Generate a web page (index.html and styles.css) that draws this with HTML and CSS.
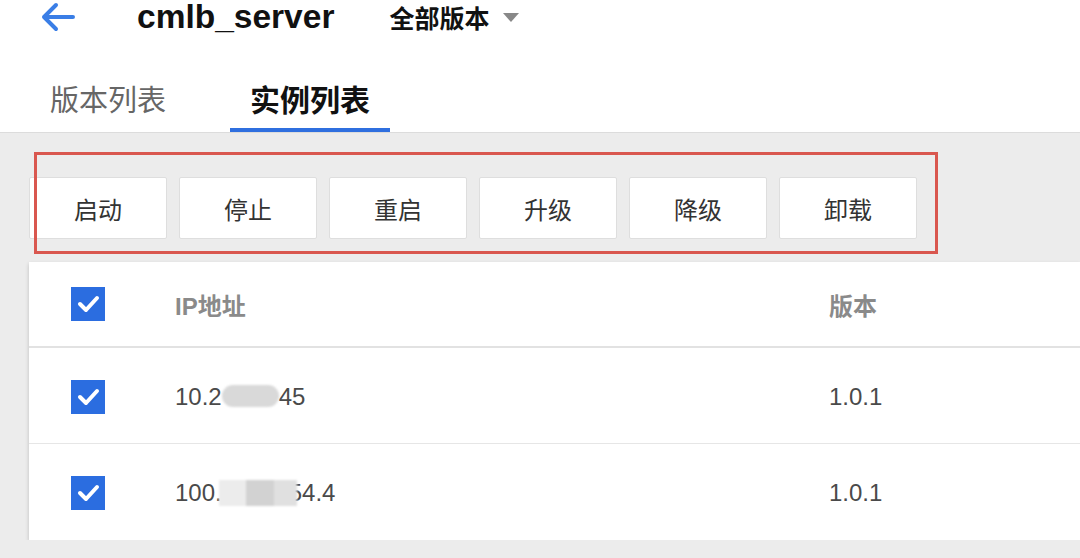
FILE: index.html
```html
<!DOCTYPE html>
<html lang="zh-CN">
<head>
    <meta charset="UTF-8">
    <title>cmlb_server - 实例列表</title>
    <link rel="stylesheet" href="styles.css">
</head>
<body>
    <header class="header">
        <div class="topbar">
            <svg class="back" width="36" height="30" viewBox="0 0 36 30">
                <path d="M34 15H5M17 3L5 15l12 12" fill="none" stroke="#3a7ee6" stroke-width="4" stroke-linecap="round" stroke-linejoin="round"/>
            </svg>
            <div class="title">cmlb_server</div>
            <div class="version-select">全部版本 <span class="caret"></span></div>
        </div>
        <nav class="tabs">
            <div class="tab">版本列表</div>
            <div class="tab active">实例列表</div>
        </nav>
    </header>
    <main class="main">
        <div class="toolbar">
            <button class="btn">启动</button>
            <button class="btn">停止</button>
            <button class="btn">重启</button>
            <button class="btn">升级</button>
            <button class="btn">降级</button>
            <button class="btn">卸载</button>
        </div>
        <div class="mark"></div>
        <div class="card">
            <div class="row head">
                <div class="cell check"><span class="checkbox"></span></div>
                <div class="cell">IP地址</div>
                <div class="cell">版本</div>
            </div>
            <div class="row">
                <div class="cell check"><span class="checkbox"></span></div>
                <div class="cell">10.2<span class="blur b1"></span>45</div>
                <div class="cell">1.0.1</div>
            </div>
            <div class="row last">
                <div class="cell check"><span class="checkbox"></span></div>
                <div class="cell">100.<span class="blur b2"></span>54.4</div>
                <div class="cell">1.0.1</div>
            </div>
        </div>
    </main>
</body>
</html>
```

FILE: styles.css
```css
body {
    margin: 0;
    font-family: "Liberation Sans", "Noto Sans CJK SC", sans-serif;
    background: #ececec;
    color: #222;
    overflow: hidden;
}
.header {
    background: #fff;
    border-bottom: 1px solid #dcdcdc;
}
.topbar {
    display: flex;
    align-items: center;
    height: 34px;
    padding-left: 39px;
}
.topbar .back {
    display: block;
}
.topbar .title {
    margin-left: 62px;
    font-size: 33.5px;
    font-weight: bold;
    color: #111;
}
.version-select {
    display: flex;
    align-items: center;
    margin-left: 55px;
    font-size: 25px;
    font-weight: bold;
    color: #111;
}
.caret {
    width: 0;
    height: 0;
    margin-left: 14px;
    border-left: 8px solid transparent;
    border-right: 8px solid transparent;
    border-top: 9px solid #888;
}
.tabs {
    display: flex;
    gap: 44px;
    padding-left: 30px;
    margin-top: 34px;
}
.tab {
    padding: 6px 20px 0;
    height: 54px;
    line-height: 54px;
    font-size: 29px;
    color: #666;
    border-bottom: 4px solid transparent;
}
.tab.active {
    font-size: 30px;
    font-weight: bold;
    color: #111;
    border-bottom-color: #2f6fdf;
}
.main {
    position: relative;
    padding: 44px 0 0 29px;
}
.toolbar {
    display: flex;
    gap: 12px;
}
.btn {
    width: 138px;
    height: 62px;
    background: #fff;
    border: 1px solid #dedede;
    border-radius: 2px;
    font-family: inherit;
    font-size: 24px;
    color: #333;
    padding: 0;
}
.mark {
    position: absolute;
    left: 34px;
    top: 19px;
    width: 898px;
    height: 96px;
    border: 3px solid #d9574f;
}
.card {
    margin-top: 23px;
    background: #fff;
    box-shadow: 0 2px 4px rgba(0, 0, 0, 0.2);
}
.row {
    display: grid;
    grid-template-columns: 146px 654px 1fr;
    align-items: center;
    height: 96px;
    padding-top: 2px;
    box-sizing: border-box;
    border-bottom: 1px solid #e6e6e6;
    font-size: 24px;
    color: #4a4a4a;
}
.row.head {
    height: 86px;
    padding-top: 0;
    border-bottom: 2px solid #e2e2e2;
    font-weight: bold;
    color: #8a8a8a;
}
.row.last {
    border-bottom: none;
}
.cell.check {
    padding-left: 42px;
}
.checkbox {
    display: block;
    width: 34px;
    height: 34px;
    background: #2b6de0 url("data:image/svg+xml;utf8,<svg xmlns='http://www.w3.org/2000/svg' viewBox='0 0 34 34'><path d='M9 17l6 6 11-12' fill='none' stroke='white' stroke-width='4' stroke-linecap='round' stroke-linejoin='round'/></svg>") center / 34px 34px no-repeat;
}
.blur {
    display: inline-block;
    vertical-align: middle;
    height: 22px;
    filter: blur(1px);
}
.b1 {
    width: 57px;
    margin-top: -4px;
    border-radius: 11px;
    background: #d9d9d9;
}
.b2 {
    position: relative;
    width: 78px;
    height: 26px;
    margin: -4px -8px 0 -3px;
    background: linear-gradient(90deg, #ececec 0, #ececec 35%, #d2d2d2 35%, #d2d2d2 70%, #e0e0e0 70%);
}
```
